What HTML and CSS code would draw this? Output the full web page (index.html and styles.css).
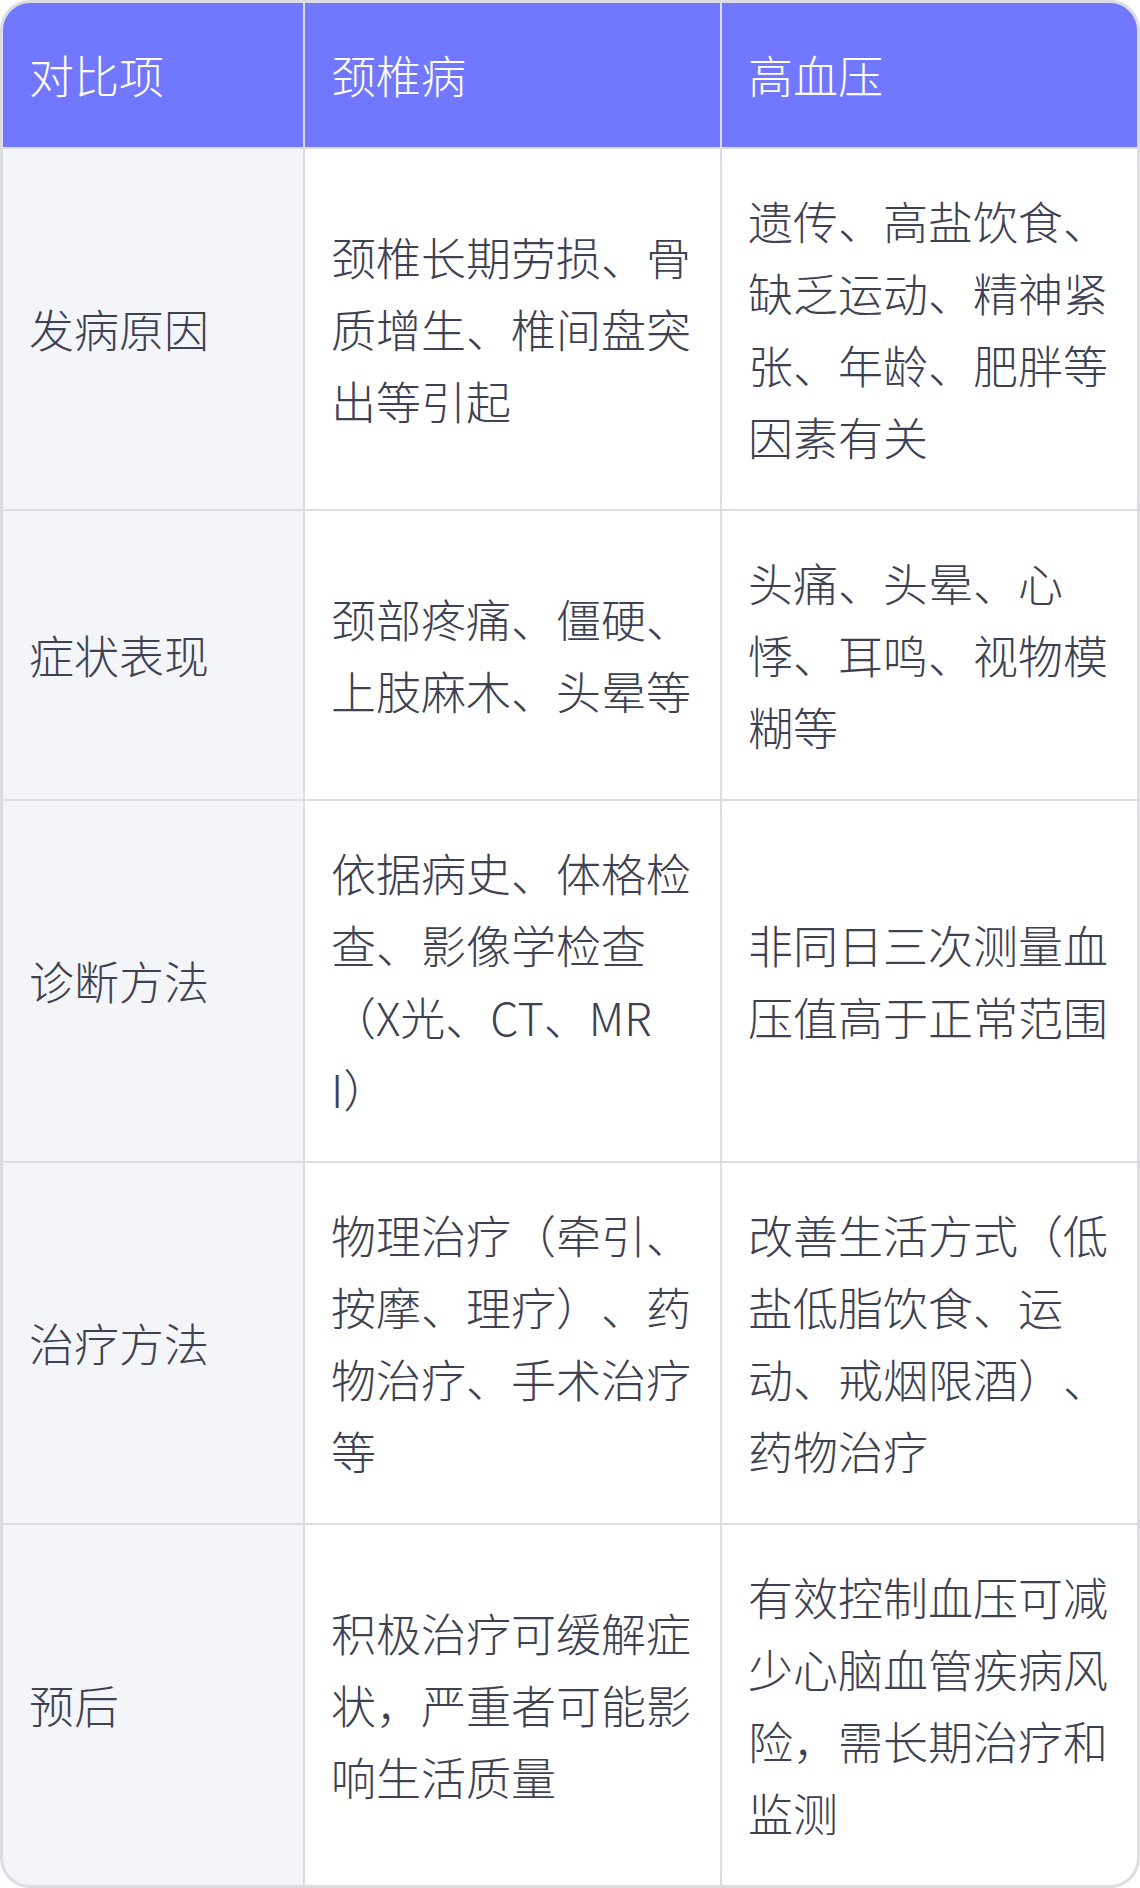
FILE: index.html
```html
<!DOCTYPE html>
<html lang="zh-CN">
<head>
<meta charset="utf-8">
<title>颈椎病与高血压对比</title>
<link rel="stylesheet" href="styles.css">
</head>
<body>
<div class="table">
  <div class="cell head">对比项</div>
  <div class="cell head">颈椎病</div>
  <div class="cell head">高血压</div>

  <div class="cell label">发病原因</div>
  <div class="cell">颈椎长期劳损、骨质增生、椎间盘突出等引起</div>
  <div class="cell">遗传、高盐饮食、缺乏运动、精神紧张、年龄、肥胖等因素有关</div>

  <div class="cell label">症状表现</div>
  <div class="cell">颈部疼痛、僵硬、上肢麻木、头晕等</div>
  <div class="cell">头痛、头晕、心悸、耳鸣、视物模糊等</div>

  <div class="cell label">诊断方法</div>
  <div class="cell">依据病史、体格检查、影像学检查（X光、CT、MRI）</div>
  <div class="cell">非同日三次测量血压值高于正常范围</div>

  <div class="cell label">治疗方法</div>
  <div class="cell">物理治疗（牵引、按摩、理疗）、药物治疗、手术治疗等</div>
  <div class="cell">改善生活方式（低盐低脂饮食、运动、戒烟限酒）、药物治疗</div>

  <div class="cell label">预后</div>
  <div class="cell">积极治疗可缓解症状，严重者可能影响生活质量</div>
  <div class="cell">有效控制血压可减少心脑血管疾病风险，需长期治疗和监测</div>
</div>
</body>
</html>
```

FILE: styles.css
```css
html, body {
  margin: 0;
  padding: 0;
  background: #ffffff;
}

body {
  font-family: "Noto Sans CJK SC", "Noto Sans", sans-serif;
  font-weight: 300;
  color: #3d4151;
}

.table {
  display: grid;
  grid-template-columns: 300px 415px 415px;
  gap: 2px;
  width: 1134px;
  background: #dcdde2;
  border: 3px solid #dcdde2;
  border-radius: 30px;
  overflow: hidden;
}

.cell {
  display: flex;
  align-items: center;
  padding: 36px 28px 36px 26px;
  font-size: 45px;
  line-height: 72px;
  background: #ffffff;
  word-break: break-all;
  text-spacing-trim: space-all;
  font-feature-settings: "halt" 0, "chws" 0;
}

.head {
  background: #7177ff;
  color: #ffffff;
}

.label {
  background: #f4f5f9;
}
```
